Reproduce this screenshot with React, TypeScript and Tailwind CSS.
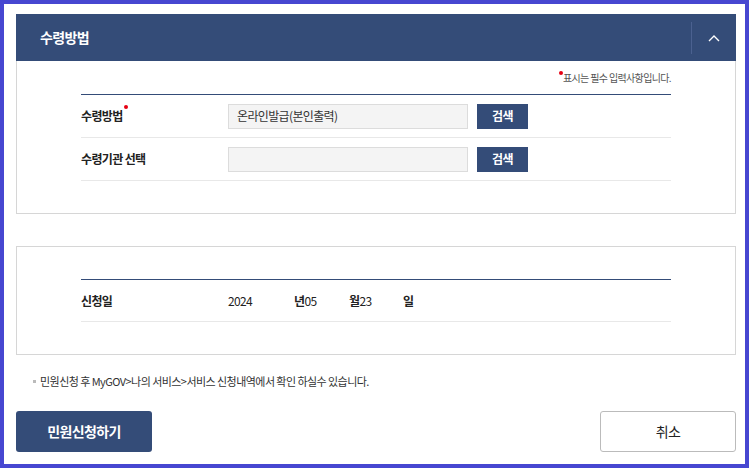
import React from 'react';

const FONT = { fontFamily: '"Noto Sans CJK KR", "Noto Sans", sans-serif' };

function SearchButton() {
  return (
    <button className="ml-[9px] h-[25px] w-[51px] bg-[#344c78] text-[12px] font-bold text-white">검색</button>
  );
}

function RedDot({ className }: { className: string }) {
  return <span className={`absolute h-[4px] w-[4px] rounded-full bg-[#e60012] ${className}`} />;
}

export default function App() {
  return (
    <div
      style={FONT}
      className="w-[749px] h-[468px] border-4 border-[#4747d1] bg-white pl-3 pr-[9px] pt-[10px] text-[#222] tracking-[-0.04em] overflow-hidden"
    >
      {/* 수령방법 panel */}
      <div className="flex h-[47px] items-center bg-[#344c78]">
        <h2 className="flex-1 pl-6 text-[14px] font-bold text-white">수령방법</h2>
        <div className="h-[32px] w-px bg-[#4b6190]" />
        <div className="flex w-[44px] items-center justify-center">
          <svg width="12" height="8" viewBox="0 0 12 8" fill="none">
            <path d="M1 7 L6 2 L11 7" stroke="white" strokeWidth="1.4" />
          </svg>
        </div>
      </div>
      <div className="h-[153px] border border-t-0 border-[#d6d6d6] px-16">
        <p className="pt-[9px] text-right text-[10px] text-[#555]">
          <span className="relative pl-[4px]">
            <RedDot className="left-0 top-[1px]" />
            표시는 필수 입력사항입니다.
          </span>
        </p>
        <div className="mt-[9px] border-t border-[#344c78]">
          <div className="flex h-[43px] items-center border-b border-[#e8e8e8]">
            <span className="w-[147px] text-[12px] font-bold">
              <span className="relative pr-[4px]">
                수령방법
                <RedDot className="right-[-1px] top-[-2px]" />
              </span>
            </span>
            <div className="flex h-[25px] w-[240px] items-center border border-[#dcdcdc] bg-[#f4f4f4] px-2 text-[12px] text-[#333]">
              온라인발급(본인출력)
            </div>
            <SearchButton />
          </div>
          <div className="flex h-[43px] items-center border-b border-[#e8e8e8]">
            <span className="w-[147px] text-[12px] font-bold">수령기관 선택</span>
            <div className="h-[25px] w-[240px] border border-[#dcdcdc] bg-[#f4f4f4]" />
            <SearchButton />
          </div>
        </div>
      </div>

      {/* 신청일 panel */}
      <div className="mt-[32px] h-[109px] border border-[#d6d6d6] px-16 pt-[32px]">
        <div className="border-t border-[#344c78]">
          <div className="flex h-[42px] items-center border-b border-[#e8e8e8] text-[12px]">
            <span className="w-[147px] font-bold">신청일</span>
            <span className="w-[66px]">2024</span>
            <span className="w-[55px]">
              <b>년</b>05
            </span>
            <span className="w-[54px]">
              <b>월</b>23
            </span>
            <b>일</b>
          </div>
        </div>
      </div>

      <p className="mt-[18px] flex items-center pl-[17px] text-[11px] tracking-[-0.05em] text-[#333]">
        <span className="mr-[4px] inline-block h-[3px] w-[3px] bg-[#bbb]" />
        민원신청 후 MyGOV&gt;나의 서비스&gt;서비스 신청내역에서 확인 하실수 있습니다.
      </p>

      <div className="mt-[21px] flex justify-between">
        <button className="h-[41px] w-[136px] rounded-[3px] bg-[#344c78] text-[14px] font-bold text-white">
          민원신청하기
        </button>
        <button className="h-[41px] w-[136px] rounded-[3px] border border-[#bbb] bg-white text-[14px] text-[#222]">
          취소
        </button>
      </div>
    </div>
  );
}
